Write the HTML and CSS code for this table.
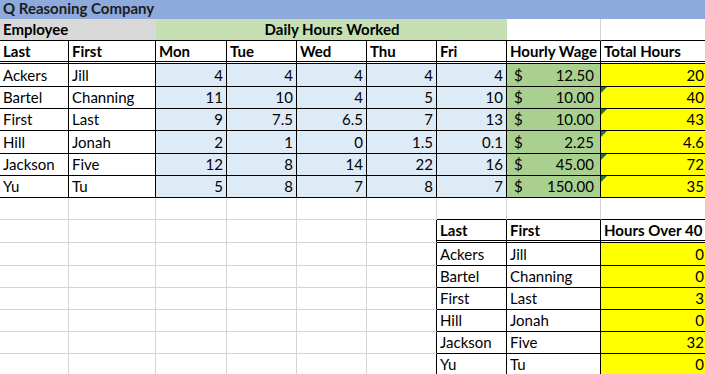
FILE: index.html
```html
<!DOCTYPE html>
<html>
<head>
<meta charset="utf-8">
<link rel="stylesheet" href="styles.css">
</head>
<body>
<div class="sheet">
  <div class="c title span9">Q Reasoning Company</div>

  <div class="c emp span2 bb">Employee</div>
  <div class="c daily span5 bb">Daily Hours Worked</div>
  <div class="c bb"></div>
  <div class="c bb"></div>

  <div class="c hd">Last</div>
  <div class="c hd">First</div>
  <div class="c hd">Mon</div>
  <div class="c hd">Tue</div>
  <div class="c hd">Wed</div>
  <div class="c hd">Thu</div>
  <div class="c hd">Fri</div>
  <div class="c hd">Hourly Wage</div>
  <div class="c hd">Total Hours</div>

  <div class="c b">Ackers</div><div class="c b">Jill</div>
  <div class="c b num day">4</div><div class="c b num day">4</div><div class="c b num day">4</div><div class="c b num day">4</div><div class="c b num day">4</div>
  <div class="c b wage"><span>$</span><span>12.50</span></div>
  <div class="c b num tot">20</div>

  <div class="c b">Bartel</div><div class="c b">Channing</div>
  <div class="c b num day">11</div><div class="c b num day">10</div><div class="c b num day">4</div><div class="c b num day">5</div><div class="c b num day">10</div>
  <div class="c b wage"><span>$</span><span>10.00</span></div>
  <div class="c b num tot flag">40</div>

  <div class="c b">First</div><div class="c b">Last</div>
  <div class="c b num day">9</div><div class="c b num day">7.5</div><div class="c b num day">6.5</div><div class="c b num day">7</div><div class="c b num day">13</div>
  <div class="c b wage"><span>$</span><span>10.00</span></div>
  <div class="c b num tot flag">43</div>

  <div class="c b">Hill</div><div class="c b">Jonah</div>
  <div class="c b num day">2</div><div class="c b num day">1</div><div class="c b num day">0</div><div class="c b num day">1.5</div><div class="c b num day">0.1</div>
  <div class="c b wage"><span>$</span><span>2.25</span></div>
  <div class="c b num tot flag">4.6</div>

  <div class="c b">Jackson</div><div class="c b">Five</div>
  <div class="c b num day">12</div><div class="c b num day">8</div><div class="c b num day">14</div><div class="c b num day">22</div><div class="c b num day">16</div>
  <div class="c b wage"><span>$</span><span>45.00</span></div>
  <div class="c b num tot flag">72</div>

  <div class="c b">Yu</div><div class="c b">Tu</div>
  <div class="c b num day">5</div><div class="c b num day">8</div><div class="c b num day">7</div><div class="c b num day">8</div><div class="c b num day">7</div>
  <div class="c b wage"><span>$</span><span>150.00</span></div>
  <div class="c b num tot flag">35</div>

  <div class="c"></div><div class="c"></div><div class="c"></div><div class="c"></div><div class="c"></div><div class="c"></div>
  <div class="c bb"></div><div class="c bb"></div><div class="c bb"></div>

  <div class="c"></div><div class="c"></div><div class="c"></div><div class="c"></div><div class="c"></div><div class="c br"></div>
  <div class="c hd">Last</div><div class="c hd">First</div><div class="c hd">Hours Over 40</div>

  <div class="c"></div><div class="c"></div><div class="c"></div><div class="c"></div><div class="c"></div><div class="c br"></div>
  <div class="c b">Ackers</div><div class="c b">Jill</div><div class="c b num tot">0</div>

  <div class="c"></div><div class="c"></div><div class="c"></div><div class="c"></div><div class="c"></div><div class="c br"></div>
  <div class="c b">Bartel</div><div class="c b">Channing</div><div class="c b num tot">0</div>

  <div class="c"></div><div class="c"></div><div class="c"></div><div class="c"></div><div class="c"></div><div class="c br"></div>
  <div class="c b">First</div><div class="c b">Last</div><div class="c b num tot">3</div>

  <div class="c"></div><div class="c"></div><div class="c"></div><div class="c"></div><div class="c"></div><div class="c br"></div>
  <div class="c b">Hill</div><div class="c b">Jonah</div><div class="c b num tot">0</div>

  <div class="c"></div><div class="c"></div><div class="c"></div><div class="c"></div><div class="c"></div><div class="c br"></div>
  <div class="c b">Jackson</div><div class="c b">Five</div><div class="c b num tot">32</div>

  <div class="c"></div><div class="c"></div><div class="c"></div><div class="c"></div><div class="c"></div><div class="c br"></div>
  <div class="c b">Yu</div><div class="c b">Tu</div><div class="c b num tot">0</div>
</div>
</body>
</html>
```

FILE: styles.css
```css
* { box-sizing: border-box; }
html, body { margin: 0; padding: 0; background: #fff; }
body {
  width: 705px;
  height: 374px;
  overflow: hidden;
  font-family: Lato, "Liberation Sans", sans-serif;
  font-size: 15px;
  color: #000;
}
.sheet {
  display: grid;
  grid-template-columns: 69px 87px 71px 70px 70px 70px 70px 94px 107px;
  grid-template-rows: 19px 22px 23px 23px 22px 22px 23px 22px 22px 22px 23px 23px 22px 22px 22px 22px 22px;
  width: 707px;
}
.c {
  position: relative;
  display: flex;
  align-items: flex-end;
  padding: 0 2px 3px 3px;
  border-right: 1px solid #d4d4d4;
  border-bottom: 1px solid #d4d4d4;
  white-space: nowrap;
  overflow: hidden;
  line-height: 1;
}
.span9 { grid-column: span 9; }
.span2 { grid-column: span 2; }
.span5 { grid-column: span 5; }

.title {
  background: #8ea9db;
  border: 0;
  font-weight: 700;
  color: #1c1c1c;
  padding-bottom: 3px;
}
.emp {
  background: #d9d9d9;
  border-right: 0;
  font-weight: 700;
}
.daily {
  background: #c6e0b4;
  border-right: 0;
  font-weight: 700;
  justify-content: center;
}
.bb { border-bottom-color: #000; }
.br { border-right-color: #000; }
.b { border-right-color: #000; border-bottom-color: #000; }
.hd {
  font-weight: 700;
  border-right-color: #000;
  border-bottom: 3px double #000;
  padding-bottom: 2px;
}
.num { justify-content: flex-end; padding-right: 3px; }
.day { background: #ddebf7; }
.wage {
  background: #a9d08e;
  justify-content: space-between;
  padding: 0 6px 3px 7px;
}
.tot { background: #ffff00; }
.flag::before {
  content: "";
  position: absolute;
  top: 0;
  left: 0;
  border-top: 6px solid #1e7145;
  border-right: 6px solid transparent;
}
```
